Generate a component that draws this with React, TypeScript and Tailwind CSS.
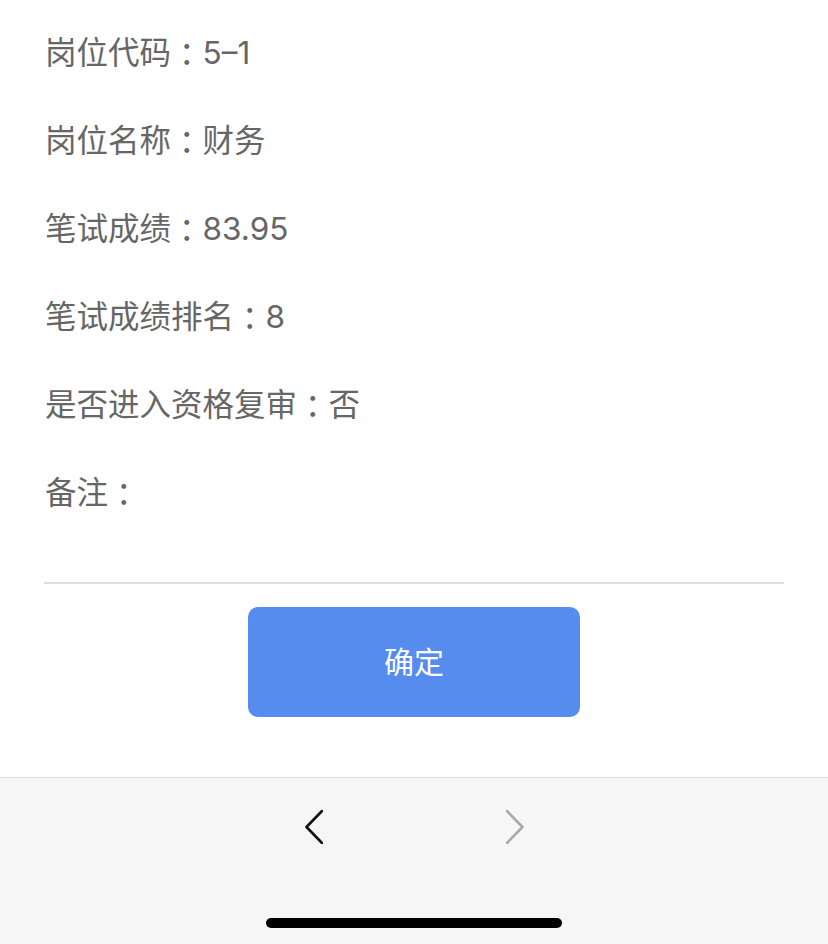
import React from 'react';

interface Row {
  label: string;
  value: string;
}

const rows: Row[] = [
  { label: '岗位代码', value: '5–1' },
  { label: '岗位名称', value: '财务' },
  { label: '笔试成绩', value: '83.95' },
  { label: '笔试成绩排名', value: '8' },
  { label: '是否进入资格复审', value: '否' },
  { label: '备注', value: '' },
];

const font = { fontFamily: 'Inter, "Noto Sans CJK SC", sans-serif' };

const App: React.FC = () => {
  return (
    <div className="w-[828px] h-[944px] bg-white flex flex-col overflow-hidden" style={font}>
      {/* Detail rows */}
      <div className="pt-[9px] px-[45px]">
        {rows.map((row) => (
          <div key={row.label} className="h-[88px] flex items-center text-[31.5px] text-[#666] leading-none">
            {row.label}
            <span className="font-['Noto_Sans_CJK_TC',sans-serif]">：</span>
            {row.value}
          </div>
        ))}
      </div>

      <div className="mx-[44px] mt-[45px] h-[2px] bg-[#dedede]" />

      <div className="flex justify-center mt-[23px]">
        <button className="w-[332px] h-[110px] rounded-[10px] bg-[#558cee] text-white text-[30px]">
          确定
        </button>
      </div>

      {/* Bottom toolbar */}
      <div className="mt-[60px] flex-1 border-t border-[#dcdcdc] bg-[#f6f6f6] flex flex-col">
        <div className="flex justify-center gap-[183px] pt-[32px]">
          <svg width="18" height="34" viewBox="0 0 18 34" fill="none">
            <path d="M17 1 L1.5 17 L17 33" stroke="#111" strokeWidth="2.6" strokeLinecap="round" strokeLinejoin="round" />
          </svg>
          <svg width="18" height="34" viewBox="0 0 18 34" fill="none">
            <path d="M1 1 L16.5 17 L1 33" stroke="#aaa" strokeWidth="2.6" strokeLinecap="round" strokeLinejoin="round" />
          </svg>
        </div>
        <div className="mt-auto mb-[16px] mx-auto w-[296px] h-[10px] rounded-full bg-black" />
      </div>
    </div>
  );
};

export default App;
